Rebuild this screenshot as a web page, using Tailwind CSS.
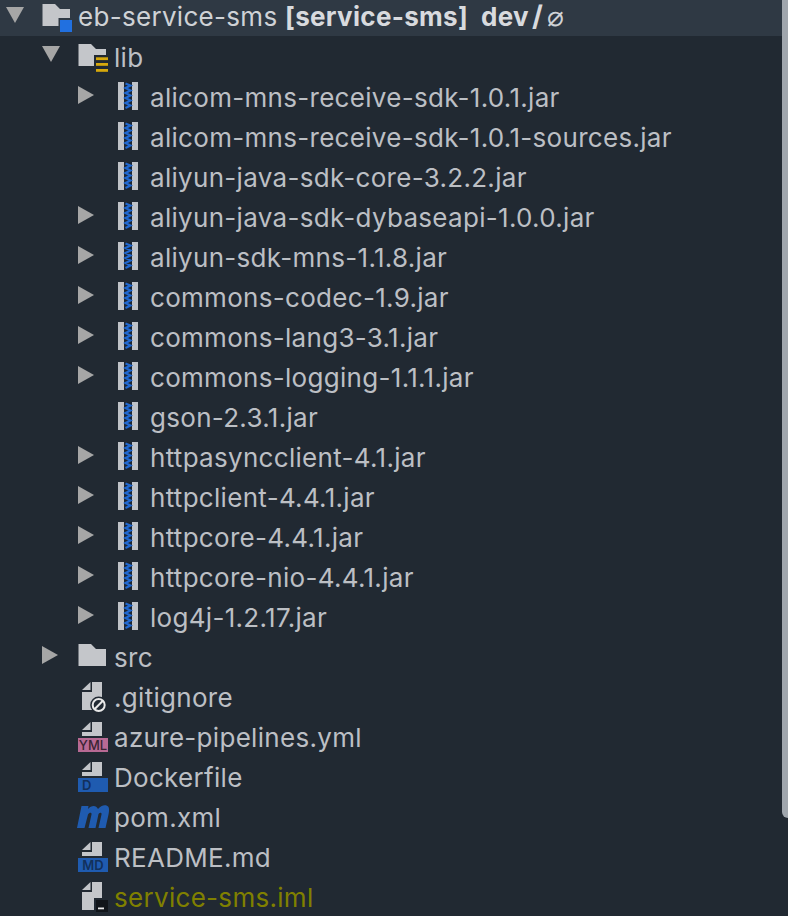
<!DOCTYPE html>
<html><head><meta charset="utf-8"><script src="https://cdn.jsdelivr.net/npm/@tailwindcss/browser@4"></script></head>
<body class="m-0 bg-[#212932]">
<svg width="0" height="0" class="absolute">
<defs>
<symbol id="down" viewBox="0 0 42 40"><path d="M6 7H24L15 23Z" fill="#a6a6a6"/></symbol>
<symbol id="right" viewBox="0 0 42 40"><path d="M6 7V25L22 16Z" fill="#a6a6a6"/></symbol>
<symbol id="folder" viewBox="0 0 36 40"><path d="M0.500 5H13L18 10H28V27H0.500Z" fill="#c4c6ca"/></symbol>
<symbol id="rootf" viewBox="0 0 36 40"><path d="M0.500 4H13L18 9H28V18H16.500V26H0.500Z" fill="#c4c6ca"/><rect x="18" y="20" width="12" height="12" fill="#2170e0"/></symbol>
<symbol id="libf" viewBox="0 0 36 40"><path d="M0.500 5H13L18 10H28V16H16V27H0.500Z" fill="#c4c6ca"/><g fill="#d6a80c"><rect x="18" y="18.300" width="12" height="2.800"/><rect x="18" y="24" width="12" height="2.800"/><rect x="18" y="30" width="12" height="2.800"/></g></symbol>
<symbol id="jar" viewBox="0 0 36 40"><rect x="4" y="3" width="6" height="28" fill="#bfc2c7"/><rect x="18" y="3" width="6" height="28" fill="#bfc2c7"/><rect x="10" y="3" width="8" height="28" fill="#1c2530"/><path d="M11.500 4.500L16.500 6.500L11.500 9L16.500 11.500L11.500 14L16.500 16.500L11.500 19L16.500 21.500L11.500 24L16.500 26.500L11.500 29" fill="none" stroke="#2068d0" stroke-width="2.200"/></symbol>
<symbol id="file" viewBox="0 0 36 40"><path d="M12.500 3V11H4Z" fill="#c4c6ca"/><path d="M14 3H24V31H4V13H14Z" fill="#c4c6ca"/></symbol>
<symbol id="topfile" viewBox="0 0 36 40"><path d="M12.500 3V11H4Z" fill="#c4c6ca"/><path d="M14 3H24V17H4V13H14Z" fill="#c4c6ca"/></symbol>
</defs>
</svg>
<div class="relative w-[788px] h-[916px] overflow-hidden font-['Inter',sans-serif] text-[26px] tracking-[0.3px] text-[#bcbfc4]">
<div class="flex h-9 items-center bg-[#2f3944] -mb-px">
<svg class="w-[42px] h-10 shrink-0 mt-1"><use href="#down"/></svg>
<svg class="w-9 h-10 shrink-0 mt-1"><use href="#rootf"/></svg>
<span class="whitespace-pre leading-none mb-1 text-[#cfd2d6]">eb-service-sms <b class="font-bold text-[#d8dade]">[service-sms]</b><b class="font-bold text-[#d8dade] ml-[13px]">dev<span class="text-[28px] ml-[3px]">/</span></b><span class="font-light ml-[4px] text-[28px]">⌀</span></span>
</div>
<div class="flex flex-col pt-[4px] relative">
<div class="flex h-10 items-center pl-9"><svg class="w-[42px] h-10 shrink-0"><use href="#down"/></svg><svg class="w-9 h-10 shrink-0"><use href="#libf"/></svg><span class="pb-1">lib</span></div>
<div class="flex h-10 items-center pl-[72px]"><svg class="w-[42px] h-10 shrink-0"><use href="#right"/></svg><svg class="w-9 h-10 shrink-0"><use href="#jar"/></svg><span class="pb-1">alicom-mns-receive-sdk-1.0.1.jar</span></div>
<div class="flex h-10 items-center pl-[114px]"><svg class="w-9 h-10 shrink-0"><use href="#jar"/></svg><span class="pb-1">alicom-mns-receive-sdk-1.0.1-sources.jar</span></div>
<div class="flex h-10 items-center pl-[114px]"><svg class="w-9 h-10 shrink-0"><use href="#jar"/></svg><span class="pb-1">aliyun-java-sdk-core-3.2.2.jar</span></div>
<div class="flex h-10 items-center pl-[72px]"><svg class="w-[42px] h-10 shrink-0"><use href="#right"/></svg><svg class="w-9 h-10 shrink-0"><use href="#jar"/></svg><span class="pb-1">aliyun-java-sdk-dybaseapi-1.0.0.jar</span></div>
<div class="flex h-10 items-center pl-[72px]"><svg class="w-[42px] h-10 shrink-0"><use href="#right"/></svg><svg class="w-9 h-10 shrink-0"><use href="#jar"/></svg><span class="pb-1">aliyun-sdk-mns-1.1.8.jar</span></div>
<div class="flex h-10 items-center pl-[72px]"><svg class="w-[42px] h-10 shrink-0"><use href="#right"/></svg><svg class="w-9 h-10 shrink-0"><use href="#jar"/></svg><span class="pb-1">commons-codec-1.9.jar</span></div>
<div class="flex h-10 items-center pl-[72px]"><svg class="w-[42px] h-10 shrink-0"><use href="#right"/></svg><svg class="w-9 h-10 shrink-0"><use href="#jar"/></svg><span class="pb-1">commons-lang3-3.1.jar</span></div>
<div class="flex h-10 items-center pl-[72px]"><svg class="w-[42px] h-10 shrink-0"><use href="#right"/></svg><svg class="w-9 h-10 shrink-0"><use href="#jar"/></svg><span class="pb-1">commons-logging-1.1.1.jar</span></div>
<div class="flex h-10 items-center pl-[114px]"><svg class="w-9 h-10 shrink-0"><use href="#jar"/></svg><span class="pb-1">gson-2.3.1.jar</span></div>
<div class="flex h-10 items-center pl-[72px]"><svg class="w-[42px] h-10 shrink-0"><use href="#right"/></svg><svg class="w-9 h-10 shrink-0"><use href="#jar"/></svg><span class="pb-1">httpasyncclient-4.1.jar</span></div>
<div class="flex h-10 items-center pl-[72px]"><svg class="w-[42px] h-10 shrink-0"><use href="#right"/></svg><svg class="w-9 h-10 shrink-0"><use href="#jar"/></svg><span class="pb-1">httpclient-4.4.1.jar</span></div>
<div class="flex h-10 items-center pl-[72px]"><svg class="w-[42px] h-10 shrink-0"><use href="#right"/></svg><svg class="w-9 h-10 shrink-0"><use href="#jar"/></svg><span class="pb-1">httpcore-4.4.1.jar</span></div>
<div class="flex h-10 items-center pl-[72px]"><svg class="w-[42px] h-10 shrink-0"><use href="#right"/></svg><svg class="w-9 h-10 shrink-0"><use href="#jar"/></svg><span class="pb-1">httpcore-nio-4.4.1.jar</span></div>
<div class="flex h-10 items-center pl-[72px]"><svg class="w-[42px] h-10 shrink-0"><use href="#right"/></svg><svg class="w-9 h-10 shrink-0"><use href="#jar"/></svg><span class="pb-1">log4j-1.2.17.jar</span></div>
<div class="flex h-10 items-center pl-9"><svg class="w-[42px] h-10 shrink-0"><use href="#right"/></svg><svg class="w-9 h-10 shrink-0"><use href="#folder"/></svg><span class="pb-1">src</span></div>
<div class="flex h-10 items-center pl-[78px]"><svg class="w-9 h-10 shrink-0" viewBox="0 0 36 40"><use href="#file"/><circle cx="20.700" cy="26" r="8.500" fill="#212932"/><circle cx="20.700" cy="26" r="6" fill="none" stroke="#e8e8e8" stroke-width="2"/><path d="M16.500 30.200L24.900 21.800" stroke="#e8e8e8" stroke-width="2"/></svg><span class="pb-1">.gitignore</span></div>
<div class="flex h-10 items-center pl-[78px] relative"><svg class="w-9 h-10 shrink-0"><use href="#topfile"/></svg><span class="pb-1">azure-pipelines.yml</span><span class="absolute left-[78px] top-[19px] w-[30px] h-[14px] bg-[#b86a94] text-[#3a2434] text-[13px] tracking-normal leading-[14px] text-center font-medium">YML</span></div>
<div class="flex h-10 items-center pl-[78px] relative"><svg class="w-9 h-10 shrink-0"><use href="#topfile"/></svg><span class="pb-1">Dockerfile</span><span class="absolute left-[78px] top-[19px] w-[30px] h-[14px] bg-[#1f5bb0] text-[#12305c] text-[13px] tracking-normal leading-[14px] pl-1 font-semibold">D</span></div>
<div class="flex h-10 items-center pl-[78px]"><svg class="w-9 h-10 shrink-0 overflow-visible" viewBox="0 0 36 40"><path d="M-1 29L3.500 7H10.500L10 10C13 6.500 18 5.500 20 10C23 6 28.500 5 30.500 8C31.500 10 31 13 30.500 15.500L27.500 29H20.500L23.500 15.500C24 13.500 22 13 20.500 15L17.500 29H10.500L13.500 15.500C14 13.500 11.500 13 10 15.500L6.500 29Z" fill="#1f5bb0"/></svg><span class="pb-1">pom.xml</span></div>
<div class="flex h-10 items-center pl-[78px] relative"><svg class="w-9 h-10 shrink-0"><use href="#topfile"/></svg><span class="pb-1">README.md</span><span class="absolute left-[78px] top-[19px] w-[30px] h-[14px] bg-[#1f5bb0] text-[#12305c] text-[13px] tracking-normal leading-[14px] text-center font-semibold">MD</span></div>
<div class="flex h-10 items-center pl-[78px]"><svg class="w-9 h-10 shrink-0" viewBox="0 0 36 40"><use href="#file"/><rect x="16" y="19" width="16" height="16" fill="#212932"/><rect x="18" y="21" width="12" height="12" fill="#11151a"/><rect x="20" y="28.500" width="6" height="1.800" fill="#e8e8e8"/></svg><span class="pb-1 text-[#808000]">service-sms.iml</span></div>
</div>
<div class="absolute right-0 top-0 w-1.5 h-[818px] bg-[#a0a6ad] rounded-bl-md"></div>
</div>
</body></html>
